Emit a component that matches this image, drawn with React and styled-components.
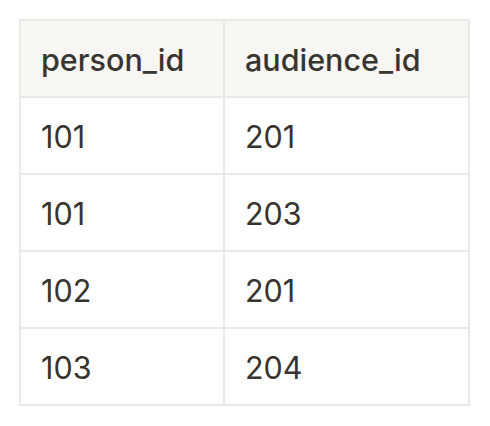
import React from 'react'
import styled, { createGlobalStyle } from 'styled-components'

const GlobalStyle = createGlobalStyle`
  body {
    margin: 0;
    background: #ffffff;
    font-family: 'Inter', 'Noto Sans', sans-serif;
  }
`

const rows = [
  ['101', '201'],
  ['101', '203'],
  ['102', '201'],
  ['103', '204'],
]

export default function App() {
  return (
    <>
      <GlobalStyle />
      <Page>
        <Table>
          <thead>
            <tr>
              <HeadCell $w={204}>person_id</HeadCell>
              <HeadCell $w={245}>audience_id</HeadCell>
            </tr>
          </thead>
          <tbody>
            {rows.map((r, i) => (
              <tr key={i}>
                <Cell>{r[0]}</Cell>
                <Cell>{r[1]}</Cell>
              </tr>
            ))}
          </tbody>
        </Table>
      </Page>
    </>
  )
}

const Page = styled.div`
  padding: 19px 0 0 19px;
`

const Table = styled.table`
  border-collapse: collapse;
  border: 2px solid #e9e9e7;
  color: #37352f;
  font-size: 30.5px;
`

const HeadCell = styled.th`
  width: ${p => p.$w}px;
  height: 77px;
  box-sizing: border-box;
  background: #f7f6f3;
  border: 2px solid #e9e9e7;
  text-align: left;
  font-weight: 500;
  padding: 2px 20px 0;
`

const Cell = styled.td`
  height: 77px;
  box-sizing: border-box;
  border: 2px solid #e9e9e7;
  padding: 2px 20px 0;
`
